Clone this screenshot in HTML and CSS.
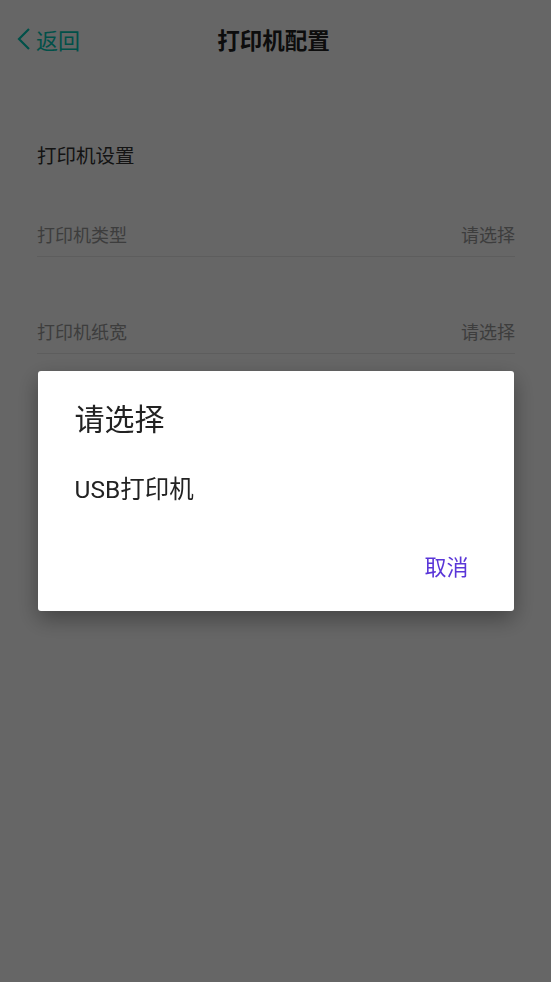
FILE: index.html
```html
<!DOCTYPE html>
<html lang="zh-CN">
<head>
  <meta charset="UTF-8" />
  <meta name="viewport" content="width=device-width, initial-scale=1.0" />
  <title>打印机配置</title>
  <link rel="stylesheet" href="styles.css">
</head>
<body>

  <!-- Top bar -->
  <div class="header">
    <a class="back" href="#">
      <svg class="back-icon" width="14" height="22" viewBox="0 0 14 22">
        <polyline points="12,1 2,11 12,21" fill="none" stroke="currentColor" stroke-width="2.2" />
      </svg>
      <span>返回</span>
    </a>
    <div class="title">打印机配置</div>
    <div></div>
  </div>

  <div class="content">
    <div class="section-title">打印机设置</div>

    <div class="row">
      <span class="label">打印机类型</span>
      <span class="value">请选择</span>
    </div>

    <div class="row">
      <span class="label">打印机纸宽</span>
      <span class="value">请选择</span>
    </div>
  </div>

  <!-- Select dialog -->
  <div class="mask">
    <div class="dialog">
      <div class="dialog-title">请选择</div>
      <div class="dialog-item">USB打印机</div>
      <div class="dialog-actions">
        <button class="dialog-btn">取消</button>
      </div>
    </div>
  </div>

</body>
</html>
```

FILE: styles.css
```css
body {
  margin: 0;
  background: #fff;
  font-family: "Noto Sans CJK SC", "Noto Sans", sans-serif;
  color: #222;
}

.header {
  height: 78px;
  padding-bottom: 2px;
  display: grid;
  grid-template-columns: 1fr auto 1fr;
  align-items: center;
}

.back {
  display: flex;
  align-items: center;
  gap: 5px;
  padding-left: 17px;
  color: #03c9b6;
  text-decoration: none;
  font-size: 22px;
}

.title {
  font-size: 22.5px;
  font-weight: bold;
  color: #222;
  margin-right: 4px;
}

.content {
  padding: 0 36px 0 37px;
}

.section-title {
  margin-top: 60px;
  font-size: 19.5px;
  line-height: 30px;
  color: #333;
}

.row {
  display: flex;
  justify-content: space-between;
  align-items: center;
  height: 44px;
  margin-top: 52px;
  border-bottom: 1px solid #e8e8e8;
  font-size: 18px;
  color: #999;
}

.section-title + .row {
  margin-top: 42px;
}

/* dim layer + dialog */
.mask {
  position: fixed;
  inset: 0;
  background: rgba(0, 0, 0, 0.6);
  display: flex;
  align-items: center;
  justify-content: center;
}

.dialog {
  width: 476px;
  height: 240px;
  box-sizing: border-box;
  background: #fff;
  border-radius: 3px;
  box-shadow: 0 8px 22px rgba(0, 0, 0, 0.35);
  padding: 26px 0 0 0;
}

.dialog-title {
  padding: 0 36px 0 37px;
  font-size: 30px;
  line-height: 40px;
  color: #222;
}

.dialog-item {
  margin-top: 35px;
  padding: 0 36px 0 37px;
  font-family: Roboto, "Noto Sans CJK SC", sans-serif;
  font-size: 24.5px;
  line-height: 36px;
  color: #222;
}

.dialog-actions {
  display: flex;
  justify-content: flex-end;
  margin-top: 30px;
  padding-right: 35px;
}

.dialog-btn {
  height: 54px;
  padding: 0 10px;
  border: none;
  background: none;
  font-family: "Noto Sans CJK SC", sans-serif;
  font-size: 22px;
  color: #5a36d8;
}
```
